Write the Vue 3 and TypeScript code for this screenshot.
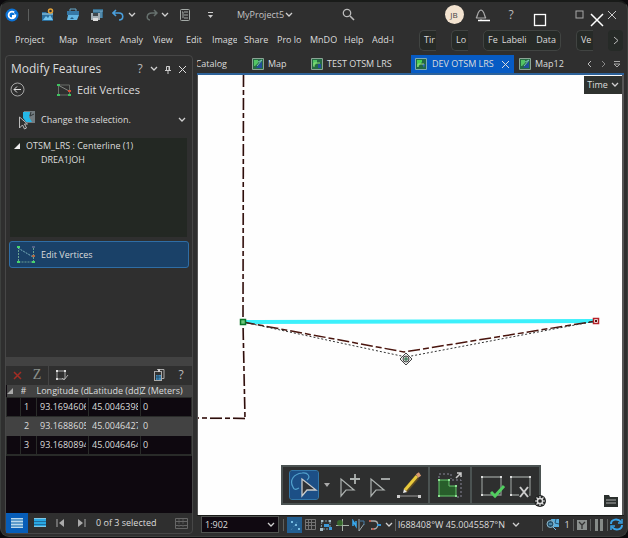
<script setup lang="ts">
import { ref } from 'vue'

interface Vertex { id: number; lon: string; lat: string; z: string }
interface Tab { label: string; width: string }

const tabs: Tab[] = [
  { label: 'Project', width: 'w44' },
  { label: 'Map', width: 'w28' },
  { label: 'Insert', width: 'w33' },
  { label: 'Analy', width: 'w33' },
  { label: 'View', width: 'w33' },
  { label: 'Edit', width: 'w26' },
  { label: 'Image', width: 'w32 clip' },
  { label: 'Share', width: 'w33' },
  { label: 'Pro lo', width: 'w33' },
  { label: 'MnDO', width: 'w34 clip' },
  { label: 'Help', width: 'w28' },
  { label: 'Add-I', width: 'w33' },
]
const groups: string[][] = [['Tir'], ['Lo'], ['Fe', 'Labeli', 'Data'], ['Ve']]
const vertices: Vertex[] = [
  { id: 1, lon: '93.1694606', lat: '45.0046398', z: '0' },
  { id: 2, lon: '93.1688605', lat: '45.0046427', z: '0' },
  { id: 3, lon: '93.1680894', lat: '45.0046464', z: '0' },
]
const current = ref(2)
const scale = ref('1:902')
</script>

<template>
  <div class="window">
    <header class="titlebar">
      <svg class="logo" width="14" height="14" viewBox="0 0 14 14"><circle cx="7" cy="7" r="6.5" fill="#0b73d8" /><circle cx="7" cy="7" r="3.4" fill="none" stroke="#fff" stroke-width="1.8" /><path d="M7 7h3v3H7z" fill="#fff" /><path d="M9.5 4l2 2" stroke="#0b73d8" stroke-width="2" /></svg>
      <span class="sep"></span>
      <button aria-label="New project"><svg width="14" height="14" viewBox="0 0 14 14"><path d="M1 4h4l1 1h6v8H1z" fill="#2c6f9d" /><path d="M2 12l3-4 2 2 2-3 3 5z" fill="#75c5ed" /><path d="M1 6h11" stroke="#a4d8ee" /><circle cx="9.5" cy="3" r="2" fill="none" stroke="#e2a23b" stroke-width="1.5" /></svg></button>
      <button aria-label="Open project"><svg width="14" height="14" viewBox="0 0 14 14"><path d="M4 3V1h6v2" fill="none" stroke="#67a8cb" /><path d="M1 3h12v4H1z" fill="#3678a5" /><path d="M2 7h11l-2 5H1z" fill="#63b6e3" /><path d="M4 11l2-2 2 2z" fill="#255a80" /></svg></button>
      <button aria-label="Save project"><svg width="14" height="14" viewBox="0 0 14 14"><path d="M3 1h10v9H3z" fill="#356987" /><path d="M3 3h10M11 3v7" stroke="#70aacd" /><path d="M1 5h9v7H1z" fill="#a4aeb5" /><path d="M3 5h5v3H3z" fill="#41474c" /><path d="M3 10h5v3H3z" fill="#ddd" /></svg></button>
      <button aria-label="Undo"><svg width="12" height="12" viewBox="0 0 12 12" fill="none" stroke="#4a9fdc" stroke-width="1.6"><path d="M4 1L1 4l3 3M1 4h6c5 0 5 7 0 7" /></svg></button>
      <button class="start" aria-label="Undo history"><svg class="chev" viewBox="0 0 8 6"><path d="M1 1l3 3 3-3" /></svg></button>
      <button aria-label="Redo"><svg width="12" height="12" viewBox="0 0 12 12" fill="none" stroke="#66706d" stroke-width="1.5"><path d="M8 1l3 3-3 3M11 4H6C0 4 0 11 4 11" /></svg></button>
      <button class="start" aria-label="Redo history"><svg class="chev" viewBox="0 0 8 6"><path d="M1 1l3 3 3-3" /></svg></button>
      <button aria-label="Contents list"><svg width="12" height="14" viewBox="0 0 12 14" fill="none" stroke="#a4aaa7"><rect x="1.5" y="1.5" width="9" height="11" rx="1" /><path d="M3 4h1M5 4h4M4 4v6M5 7h4M5 10h4" /></svg></button>
      <button aria-label="Customize toolbar"><svg width="7" height="8" viewBox="0 0 7 8"><path d="M1 1.5h5" stroke="#ccc" /><path d="M1 4h5L3.5 7z" fill="#ccc" /></svg></button>
      <button class="project">MyProject5<svg class="chev" viewBox="0 0 8 6"><path d="M1 1l3 3 3-3" /></svg></button>
      <button aria-label="Search"><svg width="13" height="13" viewBox="0 0 13 13" fill="none" stroke="#bbb" stroke-width="1.3"><circle cx="5" cy="5" r="3.7" /><path d="M8 8l4 4" stroke-width="1.6" /></svg></button>
      <span></span>
      <button aria-label="Account"><span class="avatar">JB</span></button>
      <button aria-label="Notifications"><svg width="14" height="14" viewBox="0 0 14 14" fill="none" stroke="#aaa" stroke-width="1.2"><path d="M2 10c2-1 1-7 5-8 4 1 3 7 5 8z M6 12h2" /></svg></button>
      <button class="help" aria-label="Help">?</button>
      <span></span>
      <button aria-label="Maximize"><svg width="9" height="9" viewBox="0 0 9 9"><rect x="1" y="1" width="7" height="7" fill="none" stroke="#a9a9a9" /></svg></button>
      <button aria-label="Close"><svg width="10" height="10" viewBox="0 0 10 10"><path d="M1 1l8 8M9 1L1 9" stroke="#c8c8c8" /></svg></button>
    </header>
    <div class="host-controls">
      <button aria-label="Minimize host window"><svg width="13" height="14" viewBox="0 0 13 14"><path d="M1 7.5h12" stroke="#fff" stroke-width="1.5" /></svg></button>
      <button aria-label="Restore host window"><svg width="14" height="14" viewBox="0 0 14 14"><rect x="1.5" y="1.5" width="11" height="11" fill="none" stroke="#fff" stroke-width="1.3" /></svg></button>
      <button aria-label="Close host window"><svg width="14" height="14" viewBox="0 0 14 14"><path d="M1 1l12 12M13 1L1 13" stroke="#fff" stroke-width="1.5" /></svg></button>
    </div>

    <nav class="ribbon">
      <button v-for="t in tabs" :key="t.label" :class="t.width">{{ t.label }}</button>
      <span class="grow"></span>
      <div v-for="(g, i) in groups" :key="i" class="group" :class="{ wide: g.length > 1 }">
        <button v-for="b in g" :key="b">{{ b }}</button>
      </div>
      <button class="more" aria-label="More tabs"><svg width="6" height="9" viewBox="0 0 6 9"><path d="M1 1l4 3.5L1 8" fill="none" stroke="#bbb" /></svg></button>
    </nav>

    <main class="body">
      <aside class="pane">
        <div class="pane-title">
          <h1>Modify Features</h1>
          <button class="q" aria-label="Pane help">?</button>
          <button aria-label="Pane menu"><svg class="chev" viewBox="0 0 8 6"><path d="M1 1l3 3 3-3" /></svg></button>
          <button aria-label="Pin pane"><svg width="8" height="9" viewBox="0 0 8 9" fill="none" stroke="#ccc"><path d="M2.5 5V1.5h3V5M1 5.5h6M4 6v3M5 1v4" /></svg></button>
          <button aria-label="Close pane"><svg width="9" height="9" viewBox="0 0 9 9"><path d="M1 1l7 7M8 1L1 8" stroke="#ddd" /></svg></button>
        </div>
        <div class="tool-title">
          <button aria-label="Back"><svg width="15" height="15" viewBox="0 0 15 15" fill="none" stroke="#a5a5a5"><circle cx="7.5" cy="7.5" r="6.5" /><path d="M11 7.5H4M7 4.5l-3 3 3 3" stroke="#ddd" /></svg></button>
          <h2><svg width="14" height="14" viewBox="0 0 14 14"><path d="M1.5 2v10h11V2z" fill="none" stroke="#686d68" /><path d="M1 2l11 6" stroke="#858985" /><path d="M0 1h3v2H0zM0 11h3v2H0zM11 11h3v2h-3z" fill="#3fc260" /><path d="M11 7h3v2h-3z" fill="#d64d35" /></svg>Edit Vertices</h2>
        </div>
        <button class="selection">
          <svg width="18" height="20" viewBox="0 0 18 20"><path d="M6 1h11v12H9L5 6z" fill="#737b80" /><path d="M5 2h7l-1 5 3 5H8L5 8z" fill="#25b8e7" /><path d="M13 2l-1 4 4-2" fill="none" stroke="#303638" /><path d="M1.5 7v11l3-3 2 4 2-1-2-4h3z" fill="#2f2f2f" stroke="#bbb" /></svg>
          <span>Change the selection.</span>
          <svg class="chev" viewBox="0 0 8 6"><path d="M1 1l3 3 3-3" /></svg>
        </button>
        <ul class="tree">
          <li><svg width="6" height="6" viewBox="0 0 6 6"><path d="M6 0v6H0z" fill="#eee" /></svg>OTSM_LRS : Centerline (1)
            <ul><li>DREA1JOH</li></ul>
          </li>
        </ul>
        <button class="edit">
          <svg width="18" height="18" viewBox="0 0 18 18"><path d="M1.5 1v15h15V1" fill="none" stroke="#6aa192" stroke-dasharray="2 1" /><path d="M1 2l15 9" stroke="#7ab1bb" stroke-dasharray="2 1" /><path d="M0 0h3v2H0zM0 15h3v2H0zM15 15h3v2h-3z" fill="#48d56d" /><path d="M15 9h3v2h-3z" fill="#af6848" /><path d="M15 1h3" stroke="#88a" /></svg>
          Edit Vertices
        </button>
        <span class="grow"></span>
        <div class="divider"></div>
        <div class="vertex-tools">
          <button class="s22" aria-label="Delete vertex"><svg width="9" height="9" viewBox="0 0 9 9"><path d="M1 1l7 7M8 1L1 8" stroke="#a32d24" stroke-width="1.5" /></svg></button>
          <button class="zed" aria-label="Set Z value">Z</button>
          <span class="sep"></span>
          <button class="s22" aria-label="Finish sketch"><svg width="14" height="13" viewBox="0 0 14 13"><path d="M2 2h8v8H2z" fill="none" stroke="#aaa" /><path d="M1 1h2v2H1zM9 1h2v2H9zM1 9h2v2H1z" fill="#ddd" /><path d="M7 9l2 2 4-5" fill="none" stroke="#aaa" /></svg></button>
          <span class="grow"></span>
          <button class="s22" aria-label="Copy table"><svg width="12" height="14" viewBox="0 0 12 14"><path d="M4 1.5h7v9H9" fill="none" stroke="#aaa" /><rect x="1.5" y="3.5" width="7" height="9" fill="#333" stroke="#aaa" /><path d="M6 1v3" stroke="#ccc" stroke-width="2" /><path d="M3 7h5v5H3z" fill="#4087b7" /><path d="M3 9h5M5 7v5" stroke="#23506f" /></svg></button>
          <button class="s22 help" aria-label="Table help">?</button>
        </div>
        <table>
          <colgroup><col class="c1" /><col class="c2" /><col class="c3" /><col class="c3" /><col /></colgroup>
          <thead><tr><th><svg width="6" height="6" viewBox="0 0 6 6"><path d="M6 0v6H0z" fill="#aaa" /></svg></th><th class="num">#</th><th>Longitude (dd)</th><th>Latitude (dd)</th><th>Z (Meters)</th></tr></thead>
          <tbody>
            <tr v-for="v in vertices" :key="v.id" :class="{ current: v.id === current }" @click="current = v.id">
              <td></td><td>{{ v.id }}</td><td><div>{{ v.lon }}</div></td><td><div>{{ v.lat }}</div></td><td class="z">{{ v.z }}</td>
            </tr>
          </tbody>
        </table>
        <div class="blank"></div>
        <footer class="records">
          <button class="view on" aria-label="Show all records"><svg width="14" height="12" viewBox="0 0 14 12"><path d="M1 1h12v10H1z" fill="#5f9ccb" /><path d="M1 1.5h12M1 4.5h12M1 7.5h12M1 10.5h12" stroke="#b9d8ed" /></svg></button>
          <button class="view" aria-label="Show selected records"><svg width="13" height="10" viewBox="0 0 13 10"><path d="M1 0h12v9H1z" fill="#29a8e3" /><path d="M1 .5h12M1 8.5h12" stroke="#80c6e5" /><path d="M1 3.5h12M1 6.500h12" stroke="#1f6fa0" /></svg></button>
          <button class="step" aria-label="First record"><svg width="9" height="8" viewBox="0 0 9 8"><path d="M1 0v8" stroke="#aaa" /><path d="M8 0v8L3 4z" fill="#aaa" /></svg></button>
          <button class="step" aria-label="Last record"><svg width="9" height="8" viewBox="0 0 9 8"><path d="M8 0v8" stroke="#aaa" /><path d="M1 0v8l5-4z" fill="#aaa" /></svg></button>
          <span>0 of 3 selected</span>
          <span class="grow"></span>
          <button class="s22" aria-label="Table options"><svg width="13" height="11" viewBox="0 0 13 11"><path d="M.5.5h12v10H.5zM0 3.5h13M0 7.5h13" fill="none" stroke="#666" /><path d="M4 1v9M8 1v9" stroke="#555" stroke-dasharray="2 1" /></svg></button>
        </footer>
      </aside>

      <section class="view-area">
        <div class="doc-tabs">
          <button class="catalog"><span>Catalog</span></button>
          <button class="doc map"><svg class="map-icon" viewBox="0 0 12 12"><path d="M.5.5h11v11H.5z" fill="#256b43" stroke="#8ba595" /><path d="M2 2h4v3L3 8H2z" fill="#53c564" /><path d="M10 3L4 10h6z" fill="#234f9b" /><path d="M6 4l4-2-5 6" fill="none" stroke="#76c4b3" /></svg>Map</button>
          <button class="doc test"><svg class="map-icon" viewBox="0 0 12 12"><path d="M.5.5h11v11H.5z" fill="#256b43" stroke="#8ba595" /><path d="M2 2h4v3L3 8H2z" fill="#53c564" /><path d="M7 6h3v4H7z" fill="#234f9b" /><path d="M3 9V5h6" fill="none" stroke="#8edb78" /></svg>TEST OTSM LRS</button>
          <div class="doc active"><button><svg class="map-icon" viewBox="0 0 12 12"><path d="M.5.5h11v11H.5z" fill="#236943" stroke="#7eaab3" /><path d="M2 2h5v2L3 9H2z" fill="#4bd052" /><path d="M10 6H7l2 4z" fill="#2d65c0" /><path d="M3 9V6h6" fill="none" stroke="#9fd77f" /></svg>DEV OTSM LRS</button><button class="x" aria-label="Close DEV OTSM LRS"><svg width="9" height="9" viewBox="0 0 9 9"><path d="M1 1l7 7M8 1L1 8" stroke="#ddd" /></svg></button></div>
          <button class="doc last"><svg class="map-icon" viewBox="0 0 12 12"><path d="M.5.5h11v11H.5z" fill="#256b43" stroke="#8ba595" /><path d="M2 2h4v3L3 8H2z" fill="#53c564" /><path d="M10 3L4 10h6z" fill="#234f9b" /><path d="M6 4l4-2-5 6" fill="none" stroke="#76c4b3" /></svg>Map12</button>
          <span class="grow"></span>
          <button class="nav" aria-label="Previous view"><svg width="5" height="8" viewBox="0 0 5 8"><path d="M4 1L1 4l3 3" fill="none" stroke="#bbb" /></svg></button>
          <button class="nav" aria-label="Next view"><svg width="5" height="8" viewBox="0 0 5 8"><path d="M1 1l3 3-3 3" fill="none" stroke="#888" /></svg></button>
          <button class="nav" aria-label="View list"><svg width="8" height="8" viewBox="0 0 8 8" fill="none" stroke="#aaa"><path d="M1 1.5h6M1 4h6L4 7z" /></svg></button>
        </div>

        <div class="canvas">
          <svg class="features" width="100%" height="100%" fill="none">
            <path d="M45.500 0L45 247 47 344M47 343.500L0 343" stroke="#c99" stroke-width="2" stroke-dasharray="12 3 5 3" opacity=".5" />
            <path d="M45.500 0L45 247 47 344M47 343.500L0 343" stroke="#2b0e0b" stroke-width="1.500" stroke-dasharray="12 3 5 3" />
            <path d="M45 247L398 246" stroke="#3cf0fb" stroke-width="4" />
            <path d="M45 247L206 277 398 246" stroke="#4a150e" stroke-width="1.500" stroke-dasharray="12 3 6 3" />
            <path d="M45 247L208 282 398 246" stroke="#333" stroke-dasharray="2 2" />
            <rect x="42.500" y="244.500" width="5" height="5" fill="#6bc77b" stroke="#087326" stroke-width="1.500" />
            <rect x="395.500" y="243.500" width="5" height="5" fill="#fff" stroke="#b52228" stroke-width="1.500" /><path d="M397 246h2" stroke="#511" stroke-width="2" />
            <g stroke="#444"><path d="M208 278l6 6-6 6-6-6z" fill="#eee" /><circle cx="208" cy="284" r="3" fill="#ccc" /><path d="M208 282v4M206 284h4" stroke="#267044" /></g>
          </svg>
          <button class="time">Time<svg class="chev" viewBox="0 0 8 6"><path d="M1 1l3 3 3-3" /></svg></button>
          <div class="sketch-bar">
            <div class="tools t1">
              <button class="on" aria-label="Select vertices"><svg width="28" height="28" viewBox="0 0 28 28"><path d="M3 16C-1 9 4 3 12 2c6-1 9 4 5 7M3 16c1 4 4 2 6 1" fill="none" stroke="#52a1cc" stroke-width="1.200" /><path d="M12 8v17l5-6h9z" fill="#303236" stroke="#c8cbcc" stroke-width="1.300" /></svg></button>
              <button class="tiny" aria-label="Selection tools"><svg width="6" height="4" viewBox="0 0 6 4"><path d="M0 0h6L3 4z" fill="#aaa" /></svg></button>
              <button aria-label="Add vertex"><svg width="28" height="28" viewBox="0 0 28 28" fill="none" stroke="#aeb3b1" stroke-width="1.200"><path d="M6 8v17l5-6h8z" /><path d="M20 3v10M15 8h10" stroke-width="1.800" /></svg></button>
              <button aria-label="Delete vertex"><svg width="28" height="28" viewBox="0 0 28 28" fill="none" stroke="#aeb3b1" stroke-width="1.200"><path d="M6 8v17l5-6h8z" /><path d="M16 8h9" stroke-width="1.800" /></svg></button>
              <button aria-label="Continue feature"><svg width="28" height="28" viewBox="0 0 28 28"><path d="M3 25h22" stroke="#999" /><path d="M2 24h3v3H2zM23 24h3v3h-3z" fill="#ccc" /><path d="M10 20L22 6" stroke="#604c22" stroke-width="5" /><path d="M10 19L22 5" stroke="#e8ca3d" stroke-width="3" /><path d="M22 5l3-2" stroke="#d89a72" stroke-width="4" /><path d="M8 22l1-4 3 3z" fill="#eee" /></svg></button>
            </div>
            <div class="tools t2"><button aria-label="Reshape"><svg width="28" height="28" viewBox="0 0 28 28"><path d="M3 7V3h12v5M16 9h9v17h-5" fill="none" stroke="#889" stroke-dasharray="2 2" /><path d="M3 9h10v6h7v10H3z" fill="#285e2b" stroke="#65c96c" /><path d="M2 8h2v2H2zM12 8h2v2h-2zM19 14h2v2h-2zM2 24h2v2H2zM19 24h2v2h-2z" fill="#8ee494" /><path d="M20 7l5-5M21 2h4v4" fill="none" stroke="#ccc" stroke-width="1.500" /></svg></button></div>
            <div class="tools t3">
              <button aria-label="Finish"><svg width="28" height="28" viewBox="0 0 28 28"><path d="M4 6h19v18H4z" fill="none" stroke="#898e8c" stroke-width="1.300" /><path d="M3 5h2v2H3zM22 5h2v2h-2zM3 23h2v2H3z" fill="#ddd" /><path d="M13 21l4 4 9-10" fill="none" stroke="#51ce60" stroke-width="3" /></svg></button>
              <button aria-label="Cancel"><svg width="28" height="28" viewBox="0 0 28 28"><path d="M4 6h19v18H4z" fill="none" stroke="#898e8c" stroke-width="1.300" /><path d="M3 5h2v2H3zM22 5h2v2h-2zM3 23h2v2H3z" fill="#ddd" /><path d="M12 16h10v10H12z" fill="#2d2f2f" /><path d="M13 16l8 10M21 16l-8 10" stroke="#ccc" stroke-width="2" /></svg></button>
            </div>
            <button class="gear" aria-label="Toolbar settings"><svg width="12" height="12" viewBox="0 0 12 12"><circle cx="6" cy="6" r="6" fill="#242626" /><circle cx="6" cy="6" r="2.600" fill="none" stroke="#ddd" stroke-width="1.500" /><path d="M6 1v2M6 9v2M1 6h2M9 6h2M2.500 2.500L4 4M8 8l1.500 1.500M9.500 2.500L8 4M4 8L2.500 9.500" stroke="#ddd" stroke-width="1.200" /></svg></button>
          </div>
          <button class="layers" aria-label="Map notes"><svg width="16" height="14" viewBox="0 0 16 14"><path d="M1 1h5l1 2h8v10H1z" fill="#2b302e" /><path d="M3 6h10M3 9h10" stroke="#aaa" /></svg></button>
        </div>

        <footer class="status">
          <label class="scale"><select v-model="scale" aria-label="Map scale"><option>1:902</option></select><svg class="chev" viewBox="0 0 8 6"><path d="M1 1l3 3 3-3" /></svg></label>
          <span class="sep"></span>
          <button class="snap" aria-label="Snapping"><svg width="14" height="14" viewBox="0 0 14 14"><path d="M3 3h2v2H3zM7 6h2v2H7zM10 10h2v2h-2z" fill="#77bde2" /><path d="M3 12L10 3" stroke="#427eaa" stroke-dasharray="2 2" /></svg></button>
          <button aria-label="Grid"><svg width="11" height="11" viewBox="0 0 11 11"><path d="M.5.5h10v10H.5zM3.5 0v11M6.5 0v11M0 3.5h11M0 6.5h11" fill="none" stroke="#747474" /></svg></button>
          <button aria-label="Topology"><svg width="13" height="12" viewBox="0 0 13 12"><path d="M2 2h8v8H1z" fill="none" stroke="#829dac" stroke-dasharray="2 1" /><path d="M4 5h5v3H4zM9 8h3v3H9z" fill="#3c99d8" /><path d="M1 1h2v2H1zM9 1h2v2H9zM0 9h3v3H0z" fill="#a5bac3" /></svg></button>
          <button aria-label="Constraints"><svg width="13" height="12" viewBox="0 0 13 12"><path d="M6.5 0v12M0 6.5h13" stroke="#a9b3aa" /><circle cx="4" cy="4" r="3" fill="#397e2b" opacity=".7" /></svg></button>
          <button aria-label="North correction"><svg width="13" height="12" viewBox="0 0 13 12" fill="none"><path d="M1 7V2l3 5V2" stroke="#38a9ee" stroke-width="1.500" /><path d="M7 0v12L12 5" stroke="#9ba8ad" /><path d="M8 2h4v4" stroke="#477da6" /></svg></button>
          <button aria-label="Dynamic constraints"><svg width="13" height="12" viewBox="0 0 13 12" fill="none"><path d="M2 2h4c5 0 5 7 0 8H3" stroke="#aaa" stroke-width="1.300" /><path d="M9 6h4" stroke="#3998d8" stroke-width="2" /><path d="M1 1h2v2H1zM4 9h2v2H4z" fill="#b95b4f" /></svg></button>
          <button class="narrow" aria-label="Snapping options"><svg class="chev" viewBox="0 0 8 6"><path d="M1 1l3 3 3-3" /></svg></button>
          <span class="sep"></span>
          <button class="coords"><span>l688408°W 45.0045587°N</span><svg class="chev" viewBox="0 0 8 6"><path d="M1 1l3 3 3-3" /></svg></button>
          <span class="grow"></span>
          <span class="sep"></span>
          <button class="count"><svg width="14" height="13" viewBox="0 0 14 13"><path d="M5 1h8v8H7z" fill="#56aede" /><path d="M10 1L9 5l4 1" fill="none" stroke="#245373" /><circle cx="4.500" cy="6" r="3.500" fill="#24526d" stroke="#8fb7c9" /><path d="M3 6h3M7 9l3 3" stroke="#75bde8" /></svg>1</button>
          <span class="sep"></span>
          <button class="s22" aria-label="Correction"><svg width="10" height="10" viewBox="0 0 10 10"><path d="M0 0h10v10H0z" fill="#8b908e" /><path d="M2 2l3 3 3-3M5 5v4" fill="none" stroke="#333" stroke-width="1.300" /></svg></button>
          <span class="sep"></span>
          <button class="s22" aria-label="Pause drawing"><svg width="9" height="12" viewBox="0 0 9 12"><path d="M0 0h3v12H0zM5 0h3v12H5z" fill="#868b88" /></svg></button>
          <span class="sep"></span>
          <button class="s22" aria-label="Refresh"><svg width="13" height="13" viewBox="0 0 13 13" fill="none" stroke="#39a4e8" stroke-width="2"><path d="M1 6c0-5 7-6 10-2M12 7c0 5-7 6-10 2" /><path d="M12 1v4H8M1 12V8h4" stroke-width="1.500" /></svg></button>
        </footer>
      </section>
    </main>
  </div>
</template>

<style>
body { background: #0c0a0d; }
</style>

<style scoped>
* { box-sizing: border-box; }
.window { position: relative; display: flex; flex-direction: column; height: calc(100vh - 1px); border: 1px solid #3d403e; border-top: 2px solid #191b19; border-radius: 9px; overflow: hidden; background: #2f2f2f; color: #dcdcdc; font: 9px/14px "Open Sans", "Noto Sans", sans-serif; }
button { display: flex; align-items: center; justify-content: center; padding: 0; margin: 0; border: 0; background: none; color: inherit; font: inherit; white-space: nowrap; }
svg { flex: none; display: block; }
h1, h2, ul { margin: 0; padding: 0; font-weight: 400; list-style: none; }
.chev { width: 8px; height: 6px; fill: none; stroke: #d0d0d0; stroke-width: 1.3; }
.sep { width: 1px; height: 12px; background: #5d5f5e; flex: none; }
.grow { flex: 1; }
.s22 { width: 22px; flex: none; }

.titlebar { display: grid; grid-template-columns: 24px 9px 27px 24px 24px 18px 17px 16px 14px 22px 28px 80px 88px 1fr 26px 28px 32px 34px 36px 30px; align-items: center; height: 25px; flex: none; }
.logo { margin-left: 4px; }
.titlebar .sep { margin-left: 3px; }
.start { justify-content: flex-start; padding-left: 1px; }
.project { justify-content: flex-start; padding-left: 13px; gap: 1px; color: #c4c4c4; }
.avatar { width: 19px; height: 19px; border-radius: 50%; background: #f3e3d0; color: #444; font-size: 8px; line-height: 19px; }
.help, .q { font-size: 12px; color: #bbb; }
.host-controls { position: absolute; top: 11px; right: 23px; display: flex; gap: 43px; }

.ribbon { display: flex; align-items: center; height: 26px; flex: none; padding: 0 4px 0 14px; }
.ribbon > button { justify-content: flex-start; overflow: hidden; flex: none; }
.clip { border-right: 7px solid transparent; }
.w26 { width: 26px; } .w28 { width: 28px; } .w32 { width: 32px; } .w33 { width: 33px; } .w34 { width: 34px; } .w44 { width: 44px; }
.group { display: flex; height: 21px; width: 17px; margin-right: 15px; padding-left: 4px; border: 1px solid #414442; border-right: 0; border-radius: 5px 0 0 5px; background: #262a27; overflow: hidden; flex: none; }
.group.wide { width: 78px; gap: 4px; border-right: 1px solid #414442; border-radius: 5px; }
.group.wide button:last-child { margin-left: auto; margin-right: 4px; }
.ribbon .more { justify-content: center; width: 15px; height: 21px; background: #262a27; border-radius: 4px; }

.body { flex: 1; display: flex; min-height: 0; padding: 2px 3px 2px 4px; gap: 4px; }
.pane { width: 188px; flex: none; display: flex; flex-direction: column; min-height: 0; border: 1px solid #474747; border-radius: 4px; }
.pane-title { display: flex; align-items: center; height: 26px; padding: 0 3px 0 5px; }
.pane-title h1 { flex: 1; font-size: 12px; white-space: nowrap; }
.pane-title button { width: 14px; }
.tool-title { display: grid; grid-template-columns: 22px 1fr; align-items: center; height: 15px; }
.tool-title h2 { display: flex; align-items: center; gap: 6px; padding-left: 29px; font-size: 11px; }
.selection { height: 32px; margin-top: 7px; padding: 0 6px 0 12px; gap: 5px; }
.selection span { flex: 1; text-align: left; }
.tree { height: 99px; margin: 2px 5px 0 4px; padding-top: 1px; background: #232823; }
.tree > li { position: relative; padding-left: 16px; }
.tree > li > svg { position: absolute; left: 4px; top: 4px; }
.tree ul { padding-left: 15px; }
.edit { justify-content: flex-start; gap: 6px; height: 27px; margin: 4px 3px 0; padding-left: 7px; background: #1a4168; border: 1px solid #2f6da5; border-radius: 3px; }
.divider { height: 9px; background: #424242; }
.vertex-tools { display: flex; align-items: center; height: 19px; }
.zed { width: 18px; font: 14px/18px "Liberation Serif", serif; color: #8a8f8c; }
.vertex-tools .sep { height: 19px; margin: 0 2px; background: #444; }
table { width: 100%; table-layout: fixed; border-collapse: collapse; background: #0e080f; }
.c1 { width: 14px; } .c2 { width: 16px; } .c3 { width: 52px; }
th { height: 13px; padding: 0; font-weight: 400; line-height: 12px; text-align: left; white-space: nowrap; overflow: hidden; background: #424242; }
td { height: 19px; padding: 0 0 0 3px; border: 1px solid #292b29; white-space: nowrap; }
td div { width: 46px; overflow: hidden; }
.z { padding-left: 2px; }
.current td { background: #424242; border-color: #424242; }
.blank { height: 58px; background: #0e080f; border-top: 1px solid #292b29; }
.records { display: flex; align-items: center; height: 20px; flex: none; }
.view { width: 22px; height: 20px; }
.view.on { background: #075db8; }
.step { width: 21px; }
.records span:not(.grow) { margin-left: 4px; white-space: nowrap; }

.view-area { flex: 1; min-width: 0; display: flex; flex-direction: column; padding-bottom: 1px; }
.doc-tabs { display: flex; align-items: center; height: 20px; border-bottom: 2px solid #2d6299; flex: none; }
.map-icon { width: 12px; height: 12px; }
.doc { display: flex; align-items: center; justify-content: flex-start; gap: 4px; height: 18px; flex: none; }
.doc button { gap: 5px; }
.catalog { justify-content: flex-end; width: 30px; overflow: hidden; }
.map { width: 59px; margin-left: 25px; }
.test { width: 100px; }
.active { width: 103px; padding: 0 4px; background: #075bc4; justify-content: space-between; }
.last { margin-left: 5px; }
.nav { width: 14px; height: 18px; }
.canvas { position: relative; flex: 1; min-height: 0; border-left: 1px solid #555; border-right: 2px solid #555; background: #fefefe; overflow: hidden; }
.features { position: absolute; inset: 0; }
.time { position: absolute; top: 1px; right: 0; width: 38px; height: 18px; gap: 3px; background: #2f322f; }
.sketch-bar { position: absolute; left: 50%; bottom: 10px; width: 260px; height: 40px; margin-left: -129px; display: flex; align-items: stretch; border: 2px solid #4b5352; background: #2e2f2f; }
.tools { display: flex; align-items: center; }
.t1 { flex: 1; padding-left: 7px; gap: 2px; }
.t2, .t3 { border-left: 2px solid #4b5352; padding-left: 6px; }
.t2 { width: 42px; }
.t3 { width: 69px; gap: 1px; }
.tools button.on { background: #1c4f86; border-radius: 2px; outline: 1px solid #3276a8; }
.tiny { width: 13px; }
.gear { position: absolute; right: -7px; bottom: -4px; }
.layers { position: absolute; right: 3px; bottom: 7px; }
.status { display: flex; align-items: center; height: 18px; flex: none; border-top: 1px solid #191b19; }
.scale { display: flex; align-items: center; width: 78px; height: 17px; margin: 0 4px; padding: 0 3px; border: 1px solid #505350; background: #100911; flex: none; }
.scale select { flex: 1; appearance: none; padding: 0; border: 0; background: none; color: inherit; font: inherit; }
.status > button { width: 16px; flex: none; }
.status > .snap { width: 15px; height: 16px; margin-left: 3px; background: #235f91; }
.status > .narrow { width: 13px; }
.status > .coords { width: 122px; margin-left: 2px; justify-content: space-between; }
.status > .count { width: 30px; gap: 4px; }
</style>
